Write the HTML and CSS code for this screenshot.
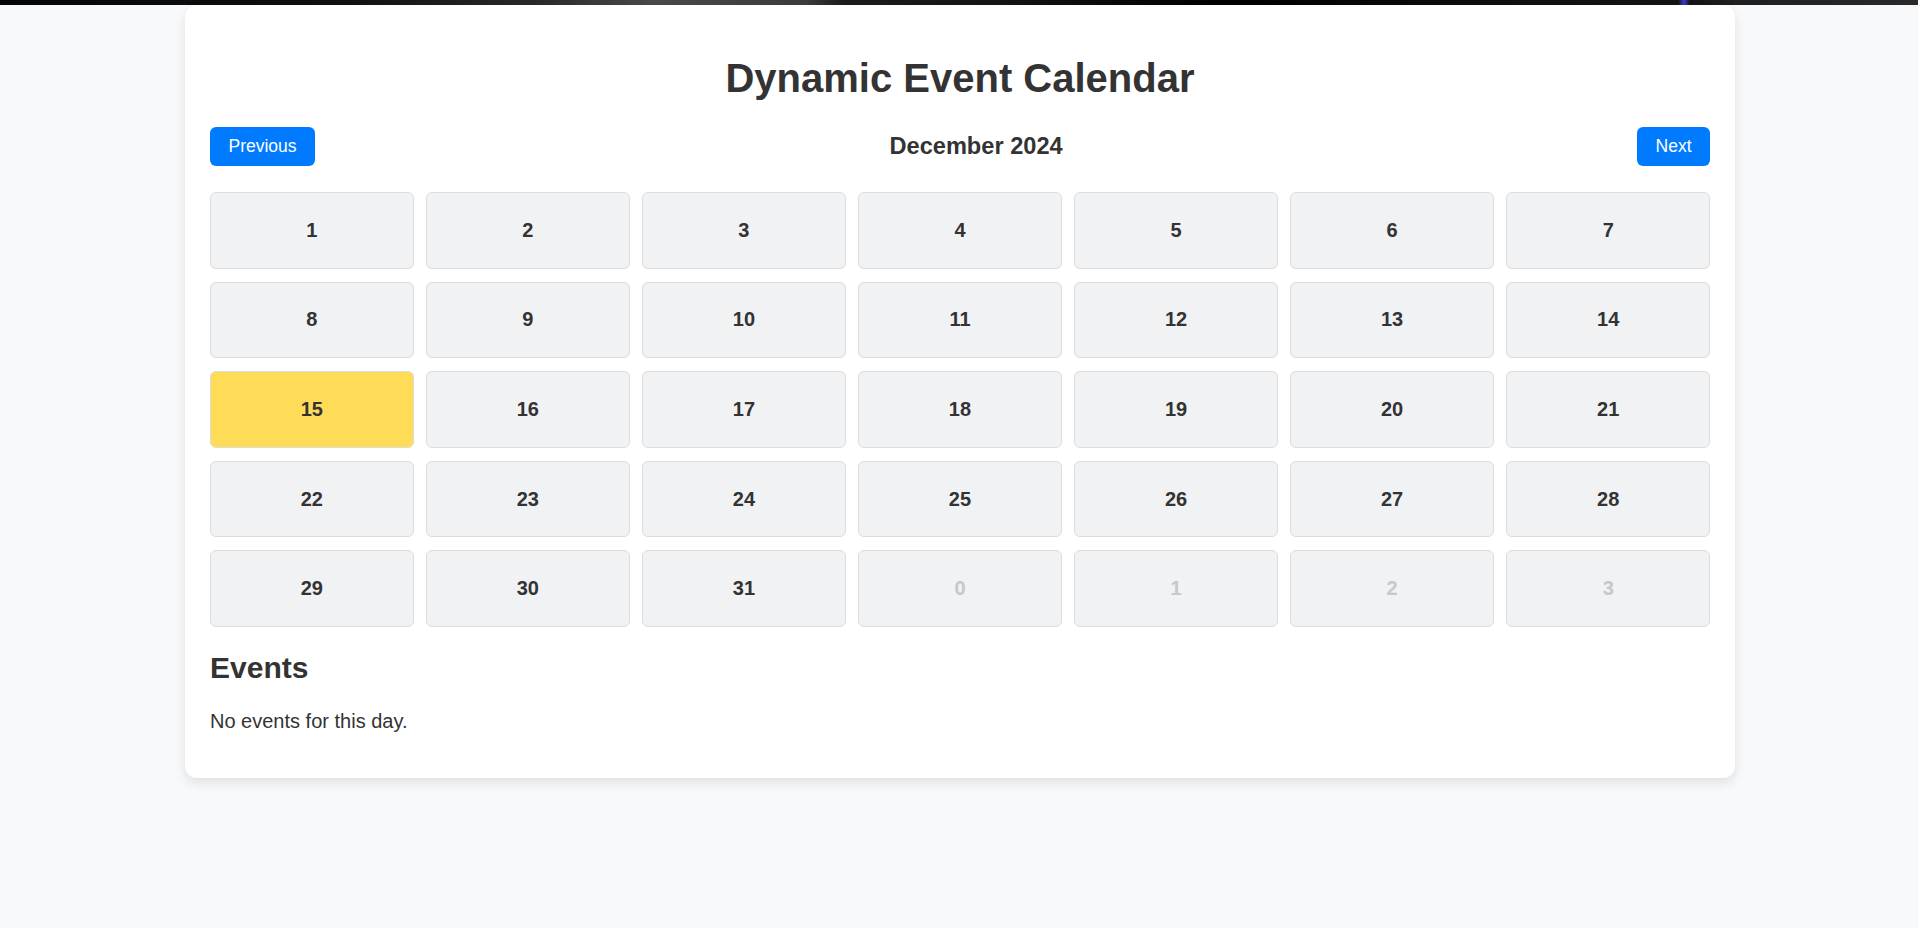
FILE: index.html
```html
<!DOCTYPE html>
<html lang="en">
<head>
<meta charset="utf-8">
<title>Dynamic Event Calendar</title>
<link rel="stylesheet" href="styles.css">
</head>
<body>
<div class="topstrip"></div>
<main class="card">
  <h1 class="title">Dynamic Event Calendar</h1>
  <div class="header">
    <button class="nav-btn">Previous</button>
    <h3 class="month">December 2024</h3>
    <button class="nav-btn">Next</button>
  </div>
  <div class="grid">
    <div class="day">1</div><div class="day">2</div><div class="day">3</div><div class="day">4</div><div class="day">5</div><div class="day">6</div><div class="day">7</div>
    <div class="day">8</div><div class="day">9</div><div class="day">10</div><div class="day">11</div><div class="day">12</div><div class="day">13</div><div class="day">14</div>
    <div class="day selected">15</div><div class="day">16</div><div class="day">17</div><div class="day">18</div><div class="day">19</div><div class="day">20</div><div class="day">21</div>
    <div class="day">22</div><div class="day">23</div><div class="day">24</div><div class="day">25</div><div class="day">26</div><div class="day">27</div><div class="day">28</div>
    <div class="day">29</div><div class="day">30</div><div class="day">31</div><div class="day other">0</div><div class="day other">1</div><div class="day other">2</div><div class="day other">3</div>
  </div>
  <h2 class="events-title">Events</h2>
  <p class="events-empty">No events for this day.</p>
</main>
</body>
</html>
```

FILE: styles.css
```css
* { box-sizing: border-box; }

html, body {
  margin: 0;
  padding: 0;
}

body {
  background: #f8f9fa;
  font-family: "Liberation Sans", Arial, sans-serif;
  color: #333;
  min-height: 928px;
}

.topstrip {
  height: 5px;
  background: linear-gradient(90deg, #050507 0%, #111114 18%, #2a2a2c 28%, #4a4a4a 34%, #3c3c3e 42%, #1c1c1e 44%, #151517 52%, #0a0a0c 58%, #000 64%, #111 80%, #141414 87.5%, #3a3ad8 87.8%, #141414 88.1%, #1e1e1e 90%, #2a2a2a 100%);
}

.card {
  width: 1550px;
  margin: 0 0 0 calc(50% - 774px);
  padding: 25px;
  background: #fff;
  border-radius: 12px;
  box-shadow: 0 5px 12px rgba(0, 0, 0, 0.1);
}

.title {
  margin: 25px 0 26px;
  font-size: 40px;
  line-height: 46px;
  font-weight: bold;
  text-align: center;
  color: #333;
}

.header {
  display: flex;
  justify-content: space-between;
  align-items: center;
  margin-bottom: 26px;
}

.nav-btn {
  font-family: "Liberation Sans", Arial, sans-serif;
  font-size: 17.5px;
  line-height: 19px;
  padding: 10px 18.5px;
  background: #007bff;
  color: #fff;
  border: none;
  border-radius: 6px;
  cursor: pointer;
}

.month {
  margin: 0;
  font-size: 23.6px;
  line-height: 27px;
  font-weight: bold;
  color: #333;
}

.grid {
  display: grid;
  grid-template-columns: repeat(7, 1fr);
  gap: 12.75px 12.5px;
}

.day {
  height: 76.8px;
  display: flex;
  align-items: center;
  justify-content: center;
  background: #f1f2f4;
  border: 1.25px solid #dcdcdc;
  border-radius: 6px;
  font-size: 20px;
  font-weight: bold;
  color: #333;
}

.day.selected {
  background: #ffdc58;
}

.day.other {
  color: #c8c8c8;
}

.events-title {
  margin: 24.5px 0 24.5px;
  font-size: 30px;
  line-height: 34.5px;
  font-weight: bold;
  color: #333;
}

.events-empty {
  margin: 0 0 19.5px;
  font-size: 20px;
  line-height: 23px;
  color: #333;
}
```
